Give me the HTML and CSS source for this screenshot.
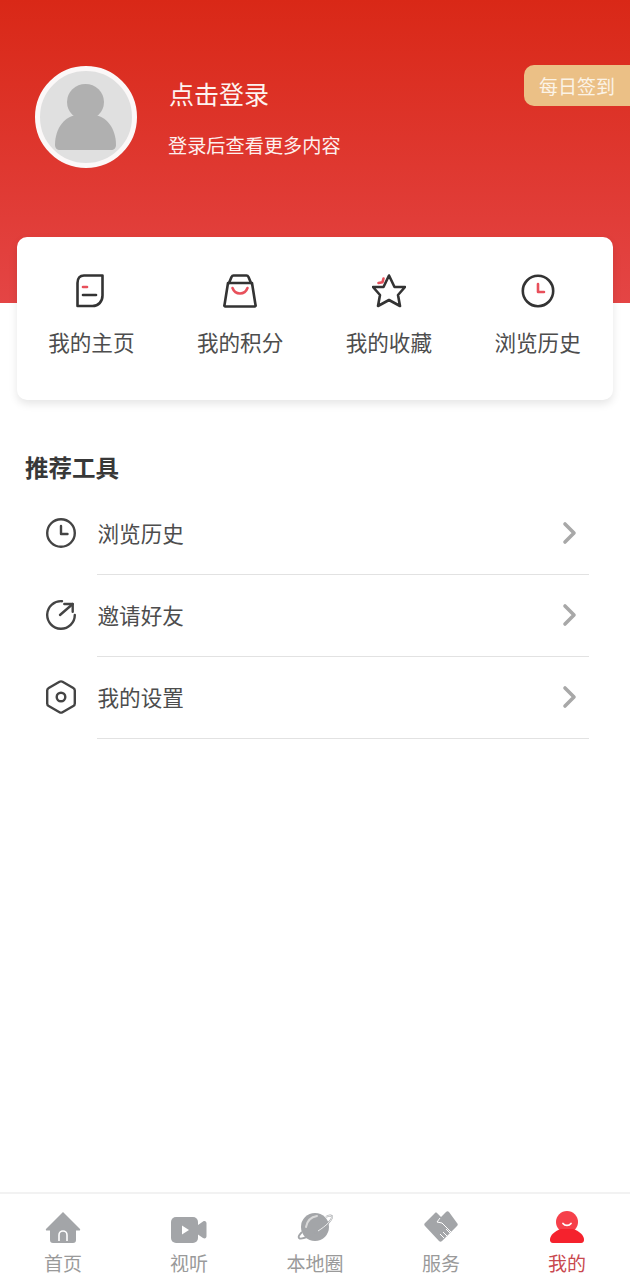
FILE: index.html
```html
<!doctype html>
<html lang="zh-CN">
  <head>
    <meta charset="UTF-8" />
    <meta name="viewport" content="width=device-width, initial-scale=1.0" />
    <title>我的</title>
    <link rel="stylesheet" href="styles.css">
  </head>
  <body>
    <div class="page">
      <main class="main">
        <!-- Header -->
        <header class="header">
          <div class="avatar">
            <svg viewBox="0 0 92 92" width="92" height="92">
              <ellipse cx="45.5" cy="31" rx="18.5" ry="18" fill="#b0b0b0" />
              <path d="M15 74c0-17 10-30 24-30h13c14 0 24 13 24 30 0 3-2 5-5 5H20c-3 0-5-2-5-5z" fill="#b0b0b0" />
            </svg>
          </div>
          <div class="user-info">
            <div class="user-title">点击登录</div>
            <div class="user-sub">登录后查看更多内容</div>
          </div>
          <div class="sign-badge">每日签到</div>
        </header>

        <!-- Quick links -->
        <section class="card">
          <div class="card-item">
            <svg class="card-icon" viewBox="0 0 34 34" width="34" height="34" fill="none" stroke-width="2.6" stroke-linecap="round" stroke-linejoin="round">
              <path d="M10 1.5h18.500v20c0 6-4 10.500-10 10.500H3.500V9c0-5 2.500-7.500 6.500-7.500z" stroke="#333" />
              <path d="M9 13h4" stroke="#e8505b" />
              <path d="M9 21h13" stroke="#333" />
            </svg>
            <span>我的主页</span>
          </div>
          <div class="card-item">
            <svg class="card-icon" viewBox="0 0 34 34" width="34" height="34" fill="none" stroke-width="2.6" stroke-linecap="round" stroke-linejoin="round">
              <path d="M5 9h24l3.500 22a1 1 0 0 1-1 1.500H2.500a1 1 0 0 1-1-1.500z" stroke="#333" />
              <path d="M6 9l2.500-6c.5-1 1-1.500 2-1.500h13c1 0 1.500.5 2 1.500L28 9" stroke="#333" />
              <path d="M9.500 14c1.500 4 4.500 5.500 7.500 5.500s6-1.500 7.500-5.500" stroke="#e8505b" />
            </svg>
            <span>我的积分</span>
          </div>
          <div class="card-item">
            <svg class="card-icon" viewBox="0 0 34 34" width="34" height="34" fill="none" stroke-width="2.6" stroke-linecap="round" stroke-linejoin="round">
              <path d="M17 1.500L22.500 13H33l-7 8 2 11-11-6-11 6 2-11-7-8h10.500z" stroke="#333" />
              <path d="M6.500 9l4-.8 1-3.700" stroke="#e8505b" />
            </svg>
            <span>我的收藏</span>
          </div>
          <div class="card-item">
            <svg class="card-icon" viewBox="0 0 34 34" width="34" height="34" fill="none" stroke-width="2.6" stroke-linecap="round" stroke-linejoin="round">
              <circle cx="17" cy="17" r="15.200" stroke="#333" />
              <path d="M17 10v8h6" stroke="#e8505b" />
            </svg>
            <span>浏览历史</span>
          </div>
        </section>

        <!-- Tools list -->
        <h2 class="section-title">推荐工具</h2>
        <ul class="tool-list">
          <li class="tool-row">
            <svg class="tool-icon" viewBox="0 0 30 34" width="30" height="34" fill="none" stroke="#444" stroke-width="2.400" stroke-linecap="round" stroke-linejoin="round">
              <circle cx="15" cy="17" r="13.800" />
              <path d="M15 10v8h6.500" />
            </svg>
            <div class="tool-body">
              <span>浏览历史</span>
              <svg class="chevron" viewBox="0 0 16 24" width="16" height="24" fill="none" stroke="#a8a8a8" stroke-width="3.600" stroke-linecap="round" stroke-linejoin="round">
                <path d="M3 3l9 9-9 9" />
              </svg>
            </div>
          </li>
          <li class="tool-row">
            <svg class="tool-icon" viewBox="0 0 30 34" width="30" height="34" fill="none" stroke="#444" stroke-width="2.400" stroke-linecap="round" stroke-linejoin="round">
              <path d="M16 3.200A13.800 13.800 0 1 0 28.800 17" />
              <path d="M14 17L26.700 6" />
              <path d="M18.300 6h8.400v7.700" />
            </svg>
            <div class="tool-body">
              <span>邀请好友</span>
              <svg class="chevron" viewBox="0 0 16 24" width="16" height="24" fill="none" stroke="#a8a8a8" stroke-width="3.600" stroke-linecap="round" stroke-linejoin="round">
                <path d="M3 3l9 9-9 9" />
              </svg>
            </div>
          </li>
          <li class="tool-row">
            <svg class="tool-icon" viewBox="0 0 30 34" width="30" height="34" fill="none" stroke="#444" stroke-width="2.400" stroke-linecap="round" stroke-linejoin="round">
              <path d="M13.500 1.800a3 3 0 0 1 3 0l10.800 6.200a3 3 0 0 1 1.500 2.600v12.800a3 3 0 0 1-1.500 2.600l-10.800 6.200a3 3 0 0 1-3 0L2.700 26a3 3 0 0 1-1.500-2.600V10.600A3 3 0 0 1 2.700 8z" />
              <circle cx="15" cy="17" r="4.300" />
            </svg>
            <div class="tool-body">
              <span>我的设置</span>
              <svg class="chevron" viewBox="0 0 16 24" width="16" height="24" fill="none" stroke="#a8a8a8" stroke-width="3.600" stroke-linecap="round" stroke-linejoin="round">
                <path d="M3 3l9 9-9 9" />
              </svg>
            </div>
          </li>
        </ul>
      </main>

      <!-- Bottom tabs -->
      <nav class="tabbar">
        <div class="tab">
          <svg viewBox="0 0 36 34" width="36" height="34">
            <path d="M18 2L35 19c.5 1 0 1.500-1 1.500h-3V30c0 2-1 3-3 3H8c-2 0-3-1-3-3v-9.500H2c-1 0-1.500-.5-1-1.500z" fill="#a3a5a8" />
            <path d="M14 31v-6a4 4 0 0 1 8 0v6" fill="none" stroke="#fff" stroke-width="1.600" />
          </svg>
          <span>首页</span>
        </div>
        <div class="tab">
          <svg viewBox="0 0 36 34" width="36" height="34">
            <rect x="0" y="7" width="27" height="26" rx="5" fill="#a3a5a8" />
            <path d="M27 15l5-3.500c2-1 3.500 0 3.500 2V26c0 2-1.500 3-3.500 2l-5-3.500z" fill="#a3a5a8" />
            <path d="M11 15.500l7 4.500-7 4.500z" fill="#fff" />
          </svg>
          <span>视听</span>
        </div>
        <div class="tab">
          <svg viewBox="0 0 36 34" width="36" height="34">
            <circle cx="18" cy="17" r="14" fill="#a3a5a8" />
            <path d="M9 17c1-6 5-10 11-11" fill="none" stroke="#d9d9d9" stroke-width="2" stroke-linecap="round" />
            <path d="M29 7c3-2 6-2 6 0 0 3-6 9-14 14S4 30 2 28c-1-1 0-3 3-6" fill="none" stroke="#a3a5a8" stroke-width="1.800" />
            <path d="M29 7c3-2 6-2 6 0 0 3-6 9-14 14" fill="none" stroke="#fff" stroke-width="0.800" />
          </svg>
          <span>本地圈</span>
        </div>
        <div class="tab">
          <svg viewBox="0 0 36 34" width="36" height="34">
            <path d="M12 3L2 13c-1 1-1 2 0 3l14 15c1 1 2 1 3 0l15-15c1-1 1-2 0-3L26 2c-1-1-2-1-3 0l-5 5-4-4c-.7-.6-1.400-.6-2 0z" fill="#a3a5a8" />
            <path d="M17 8l-3 4 5 1 9 9M20 22l5 5M17 24l4 4M23 19l5 5" fill="none" stroke="#fff" stroke-width="1" />
          </svg>
          <span>服务</span>
        </div>
        <div class="tab tab-active">
          <svg viewBox="0 0 36 34" width="36" height="34">
            <circle cx="18" cy="12" r="11" fill="#f6404a" />
            <path d="M12 19C6 21 1.500 25 1 29c-.3 2.500 1 4 3 4h28c2 0 3.300-1.500 3-4-.5-4-5-8-11-10z" fill="#f5222d" />
            <path d="M14 13.500c2 2.500 6 2.500 8 0" fill="none" stroke="#fff" stroke-width="1.800" stroke-linecap="round" />
          </svg>
          <span>我的</span>
        </div>
      </nav>
    </div>
  </body>
</html>
```

FILE: styles.css
```css
body {
  margin: 0;
  font-family: "Noto Sans CJK SC", "Noto Sans", sans-serif;
  background-color: #fff;
  color: #4d4d4d;
}
.page {
  display: flex;
  flex-direction: column;
  height: 1280px;
  overflow: hidden;
}
.main {
  flex: 1;
}
.header {
  display: flex;
  align-items: flex-start;
  box-sizing: border-box;
  height: 303px;
  padding: 65px 0 0 35px;
  background: linear-gradient(180deg, #d92817 0%, #e44545 100%);
  color: #fff;
}
.avatar {
  display: flex;
  align-items: center;
  justify-content: center;
  box-sizing: border-box;
  width: 102px;
  height: 102px;
  margin-top: 1px;
  border: 5px solid #fbf8f8;
  border-radius: 50%;
  background-color: #e0e0e0;
}
.user-info {
  margin: 10px 0 0 32px;
}
.user-title {
  color: #fdf3f0;
  font-size: 25px;
  line-height: 36px;
}
.user-sub {
  margin-top: 20px;
  margin-left: -1px;
  font-size: 19.2px;
  line-height: 28px;
  color: #fdf0ee;
}
.sign-badge {
  margin-left: auto;
  width: 106px;
  height: 41px;
  border-radius: 10px 0 0 10px;
  background-color: #ebc086;
  color: #fbf3e6;
  font-size: 19px;
  line-height: 41px;
  text-align: center;
}
.card {
  display: grid;
  grid-template-columns: repeat(4, 1fr);
  box-sizing: border-box;
  height: 163px;
  margin: -66px 17px 0;
  padding: 37px 1px 0 0;
  border-radius: 10px;
  background-color: #fff;
  box-shadow: 0 4px 8px rgba(0, 0, 0, 0.1);
}
.card-item {
  display: flex;
  flex-direction: column;
  align-items: center;
  font-size: 21.6px;
  line-height: 30px;
}
.card-icon {
  margin-bottom: 19px;
}
.section-title {
  margin: 51px 0 0 25px;
  color: #383838;
  font-size: 23.5px;
  font-weight: 700;
  line-height: 32px;
}
.tool-list {
  margin: 10px 0 0;
  padding: 0;
  list-style: none;
}
.tool-row {
  display: flex;
  align-items: stretch;
  height: 82px;
  padding: 0 41px 0 46px;
}
.tool-icon {
  margin: 23px 21px 0 0;
}
.tool-body {
  flex: 1;
  display: flex;
  align-items: center;
  justify-content: space-between;
  box-sizing: border-box;
  padding: 0 11px 1px 0.5px;
  border-bottom: 1px solid #e2e2e2;
  font-size: 21.6px;
}
.tool-body span {
  margin-bottom: 2px;
}
.tabbar {
  display: flex;
  box-sizing: border-box;
  height: 88px;
  padding-top: 16px;
  border-top: 2px solid #f2f2f2;
  background-color: #fff;
}
.tab {
  flex: 1;
  display: flex;
  flex-direction: column;
  align-items: center;
  color: #9a9a9a;
  font-size: 19px;
  line-height: 24px;
}
.tab span {
  margin-top: 7px;
}
.tab-active {
  color: #c9494f;
}
```
